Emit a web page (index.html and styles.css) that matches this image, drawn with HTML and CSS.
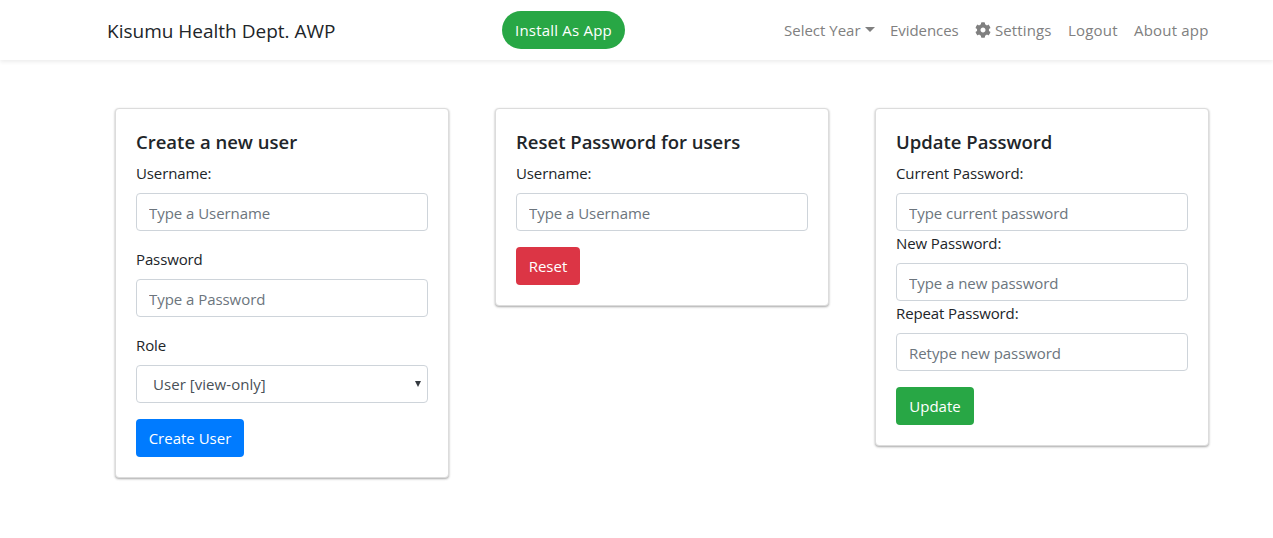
FILE: index.html
```html
<!DOCTYPE html>
<html lang="en">
<head>
<meta charset="utf-8">
<title>Kisumu Health Dept. AWP</title>
<link rel="stylesheet" href="styles.css">
</head>
<body>
<nav class="navbar">
  <a class="brand">Kisumu Health Dept. AWP</a>
  <button class="btn btn-install">Install As App</button>
  <div class="nav-links">
    <a class="nav-link link-year">Select Year<span class="caret"></span></a>
    <a class="nav-link link-evidences">Evidences</a>
    <a class="nav-link link-settings"><svg class="gear" viewBox="0 0 512 512"><path fill="currentColor" d="M487.4 315.7l-42.6-24.6c4.3-23.2 4.3-47 0-70.2l42.6-24.6c4.9-2.8 7.1-8.6 5.5-14-11.1-35.6-30-67.8-54.7-94.6-3.8-4.1-10-5.1-14.8-2.3L380.8 110c-17.9-15.4-38.5-27.3-60.8-35.1V25.800c0-5.600-3.900-10.500-9.400-11.700-36.700-8.200-74.300-7.800-109.200 0-5.500 1.200-9.400 6.100-9.400 11.700V75c-22.200 7.900-42.800 19.800-60.800 35.100L88.700 85.500c-4.900-2.800-11-1.900-14.800 2.300-24.700 26.700-43.600 58.900-54.700 94.600-1.700 5.400.6 11.200 5.500 14L67.300 221c-4.300 23.200-4.300 47 0 70.200l-42.600 24.600c-4.900 2.800-7.100 8.600-5.500 14 11.100 35.600 30 67.800 54.700 94.600 3.800 4.100 10 5.100 14.800 2.300l42.600-24.600c17.900 15.400 38.500 27.300 60.800 35.100v49.200c0 5.600 3.900 10.500 9.400 11.700 36.700 8.200 74.300 7.800 109.200 0 5.500-1.200 9.400-6.100 9.400-11.700v-49.200c22.200-7.900 42.800-19.800 60.800-35.100l42.600 24.600c4.900 2.800 11 1.900 14.800-2.300 24.700-26.700 43.600-58.900 54.700-94.600 1.500-5.500-.7-11.300-5.600-14.100zM256 336c-44.100 0-80-35.900-80-80s35.900-80 80-80 80 35.900 80 80-35.900 80-80 80z"/></svg>Settings</a>
    <a class="nav-link link-logout">Logout</a>
    <a class="nav-link link-about">About app</a>
  </div>
</nav>
<main class="cards">
  <form class="card">
    <h5 class="title">Create a new user</h5>
    <div class="group">
      <label class="label">Username:</label>
      <input class="control" placeholder="Type a Username">
    </div>
    <div class="group">
      <label class="label">Password</label>
      <input class="control" placeholder="Type a Password">
    </div>
    <div class="group">
      <label class="label">Role</label>
      <div class="select-wrap">
        <select class="control select"><option>User [view-only]</option></select>
      </div>
    </div>
    <button type="button" class="btn btn-primary">Create User</button>
  </form>
  <form class="card">
    <h5 class="title">Reset Password for users</h5>
    <div class="group">
      <label class="label">Username:</label>
      <input class="control" placeholder="Type a Username">
    </div>
    <button type="button" class="btn btn-danger">Reset</button>
  </form>
  <form class="card">
    <h5 class="title">Update Password</h5>
    <div class="group">
      <label class="label">Current Password:</label>
      <input class="control" placeholder="Type current password">
      <label class="label">New Password:</label>
      <input class="control" placeholder="Type a new password">
      <label class="label">Repeat Password:</label>
      <input class="control" placeholder="Retype new password">
    </div>
    <button type="button" class="btn btn-success">Update</button>
  </form>
</main>
</body>
</html>
```
FILE: styles.css
```css
* { box-sizing: border-box; }
body {
  margin: 0;
  background: #fff;
  color: #212529;
  font: 400 15px/24px "Open Sans", "Noto Sans", sans-serif;
}
.navbar {
  display: grid;
  grid-template-columns: 395px 123px 1fr;
  align-items: center;
  height: 60px;
  padding: 0 64px 0 107px;
  background: #fff;
  box-shadow: 0 2px 4px rgba(0, 0, 0, .075);
}
.brand {
  padding-top: 2px;
  font-size: 19px;
  line-height: 30px;
  white-space: nowrap;
}
.nav-links {
  display: flex;
  justify-content: flex-end;
  gap: 16px;
}
.nav-link {
  display: flex;
  align-items: center;
  color: #808080;
  white-space: nowrap;
}
.link-year { width: 90px; }
.link-evidences { width: 69px; letter-spacing: -.05px; }
.link-settings { width: 77px; letter-spacing: .1px; }
.link-logout { width: 50px; letter-spacing: .2px; }
.link-about { width: 75px; letter-spacing: .2px; }
.caret {
  margin: -1px 0 0 4px;
  border: 5px solid transparent;
  border-top-color: currentColor;
  border-bottom: 0;
}
.gear {
  flex: none;
  width: 16px;
  height: 16px;
  margin: 0 4px 0 0;
}
.btn {
  display: block;
  height: 38px;
  padding: 0 0 1px;
  border: 0;
  border-radius: 4px;
  color: #fff;
  font: inherit;
  text-align: center;
  white-space: nowrap;
}
.btn-install { width: 123px; border-radius: 19px; background: #28a745; letter-spacing: .2px; }
.btn-primary { width: 108px; background: #007bff; }
.btn-danger { width: 64px; background: #dc3545; }
.btn-success { width: 78px; background: #28a745; }
.cards {
  display: grid;
  grid-template-columns: repeat(3, 334px);
  gap: 46px;
  align-items: start;
  padding: 48px 0 24px 115px;
}
.card {
  padding: 20px;
  border: 1px solid #dcdcdc;
  border-radius: 4px;
  background: #fff;
  box-shadow: 0 1px 3px rgba(0, 0, 0, .12), 0 1px 2px rgba(0, 0, 0, .24);
}
.title {
  margin: 0 0 8px;
  padding-top: 1px;
  font-size: 18.5px;
  font-weight: 600;
  line-height: 23px;
  white-space: nowrap;
}
.group { margin-bottom: 16px; }
.label { display: block; margin-bottom: 8px; letter-spacing: -.12px; }
.control {
  display: block;
  width: 100%;
  height: 38px;
  padding: 8px 12px 6px;
  border: 1px solid #ced4da;
  border-radius: 4px;
  background: #fff;
  color: #495057;
  font: inherit;
  letter-spacing: -.05px;
}
.control::placeholder { color: #6c757d; opacity: 1; }
.select-wrap { position: relative; }
.select-wrap::after {
  content: "";
  position: absolute;
  top: 16px;
  right: 7px;
  border: 3px solid transparent;
  border-top: 6px solid #343a40;
  border-bottom: 0;
}
.select { padding: 6px 12px 6px 16px; appearance: none; letter-spacing: .05px; }
```
